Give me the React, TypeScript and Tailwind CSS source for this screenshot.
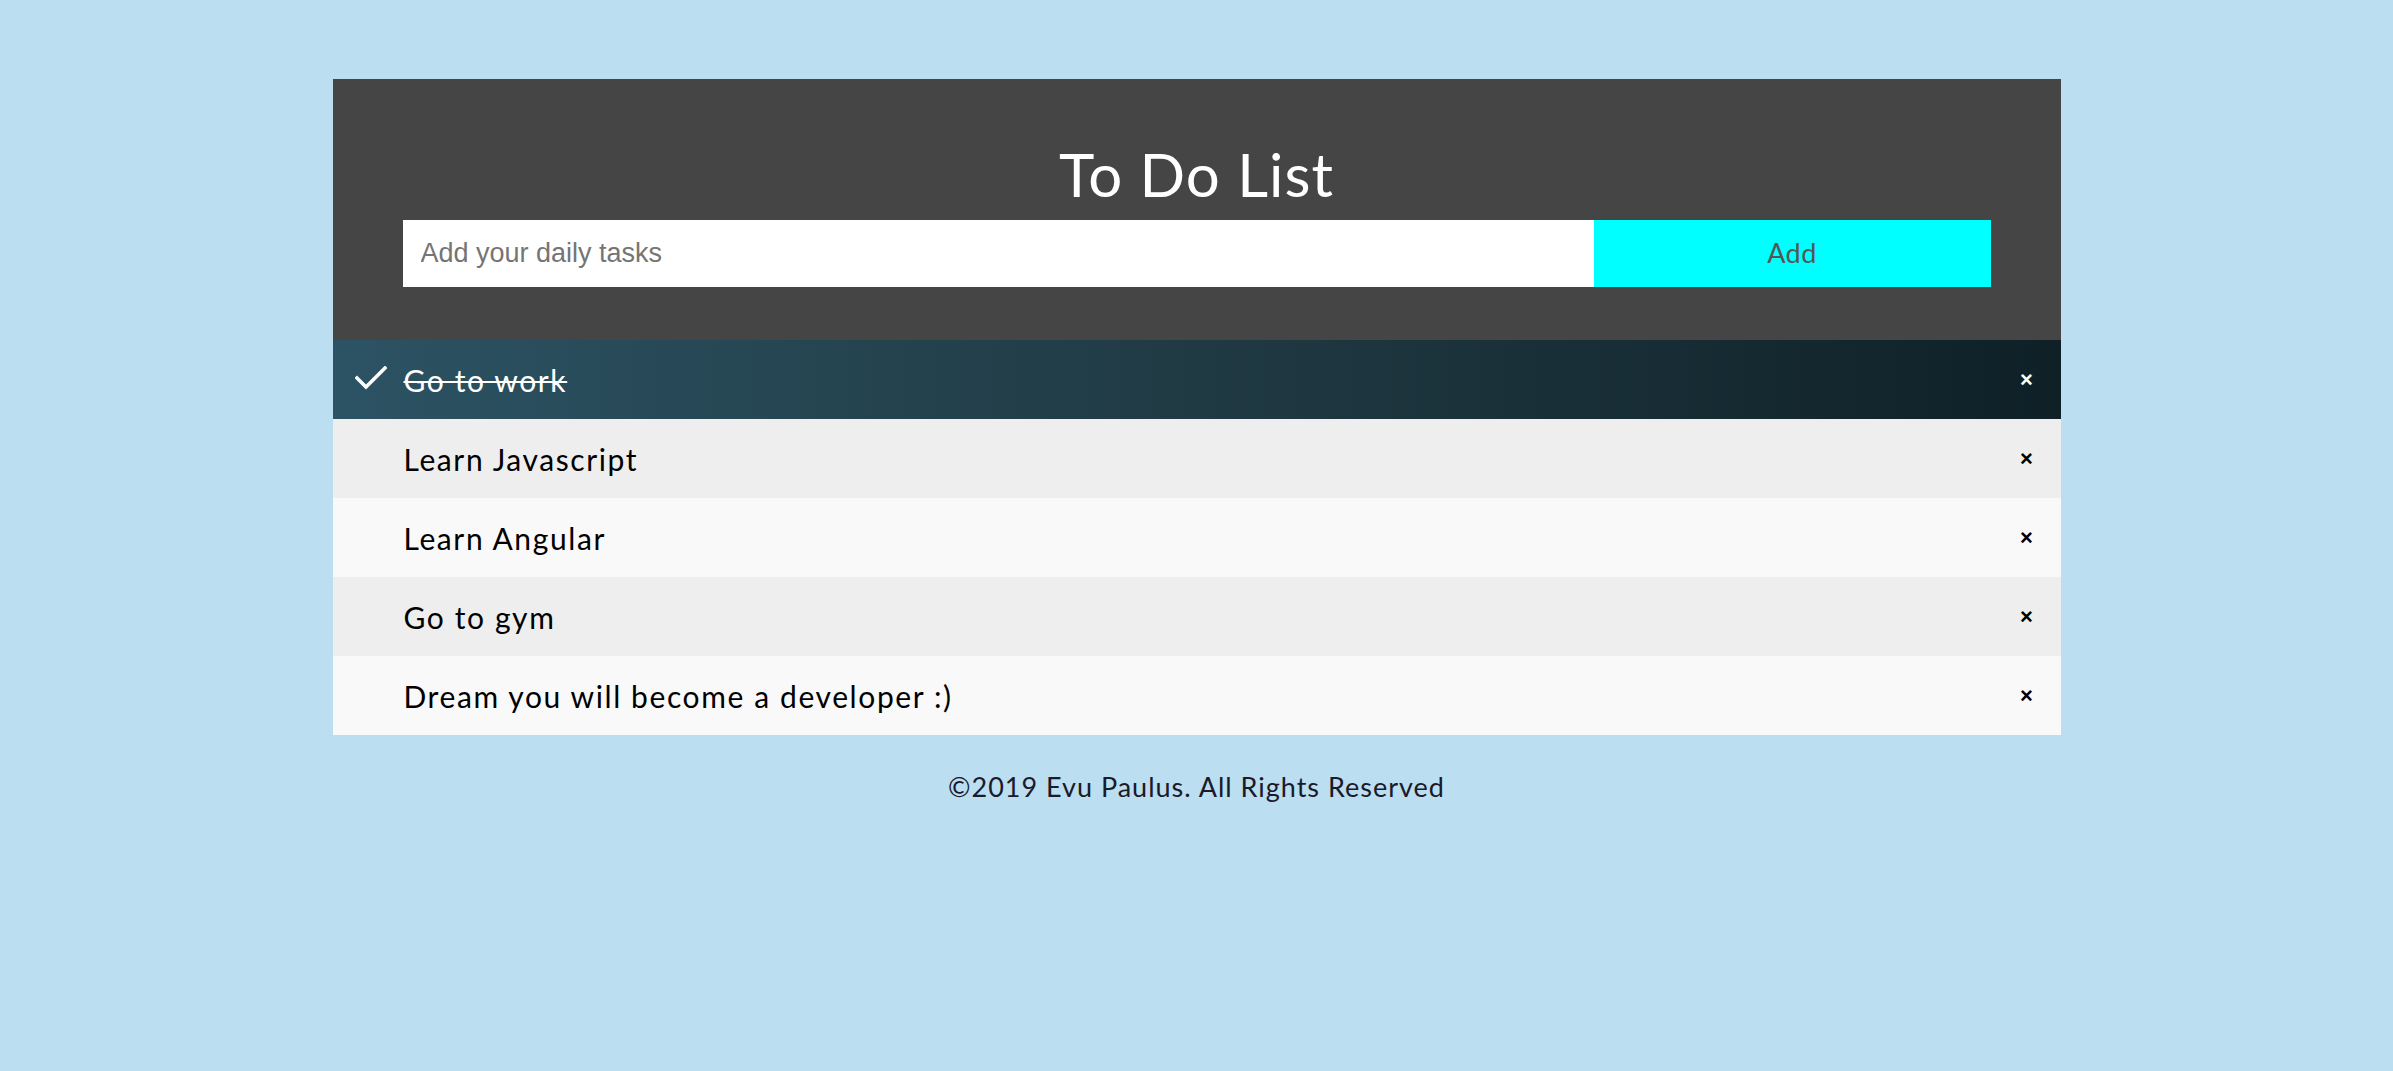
import React from "react";

const items = [
  { text: "Go to work", checked: true },
  { text: "Learn Javascript", checked: false },
  { text: "Learn Angular", checked: false },
  { text: "Go to gym", checked: false },
  { text: "Dream you will become a developer :)", checked: false },
];

export default function App() {
  return (
    <div
      className="min-h-screen bg-[#bbdef0] pt-[79px]"
      style={{ fontFamily: "Lato, 'Open Sans', sans-serif" }}
    >
      <div className="w-[1728px] mx-auto">
        <div className="bg-[#454545] pt-[65px] pb-[53px] px-[70px] flex flex-col">
          <h2 className="text-white text-center text-[60px] leading-[60px] tracking-[1px] font-normal m-0">
            To Do List
          </h2>
          <div className="flex mt-[16px] h-[67px]">
            <input
              className="flex-1 h-full bg-white pl-[18px] text-[27px] outline-none placeholder:text-[#757575]"
              style={{ fontFamily: "'Liberation Sans', Arial, sans-serif" }}
              placeholder="Add your daily tasks"
            />
            <button className="w-[397px] h-full bg-[#00ffff] text-[#555555] text-[27px] tracking-[0.5px] flex items-center justify-center">
              Add
            </button>
          </div>
        </div>
        <ul>
          {items.map((it, i) => (
            <li
              key={i}
              className={
                "h-[79px] flex items-center " +
                (it.checked
                  ? "bg-[linear-gradient(to_right,#2c5364,#203a43,#0f2027)] text-white"
                  : i % 2 === 1
                  ? "bg-[#eeeeee] text-black"
                  : "bg-[#f9f9f9] text-black")
              }
            >
              <div className="w-[71px] h-full flex items-center justify-center shrink-0">
                {it.checked && (
                  <svg width="32" height="24" viewBox="0 0 32 24" className="ml-[5px] -mt-[4px]">
                    <polyline
                      points="2,12 11,21 30,2"
                      fill="none"
                      stroke="white"
                      strokeWidth="3.5"
                      strokeLinecap="square"
                    />
                  </svg>
                )}
              </div>
              <span
                className={
                  "flex-1 text-[30px] leading-[36px] tracking-[1.6px] " +
                  (it.checked ? "line-through decoration-2" : "")
                }
              >
                {it.text}
              </span>
              <span
                className={
                  "w-[68px] text-center text-[22px] font-bold " +
                  (it.checked ? "text-white" : "text-black")
                }
                style={{ fontFamily: "'Liberation Sans', Arial, sans-serif" }}
              >
                ×
              </span>
            </li>
          ))}
        </ul>
        <p className="mt-[38px] text-center text-[27px] leading-[27px] tracking-[1px] text-[#1a1a2a]">
          ©2019 Evu Paulus. All Rights Reserved
        </p>
      </div>
    </div>
  );
}
